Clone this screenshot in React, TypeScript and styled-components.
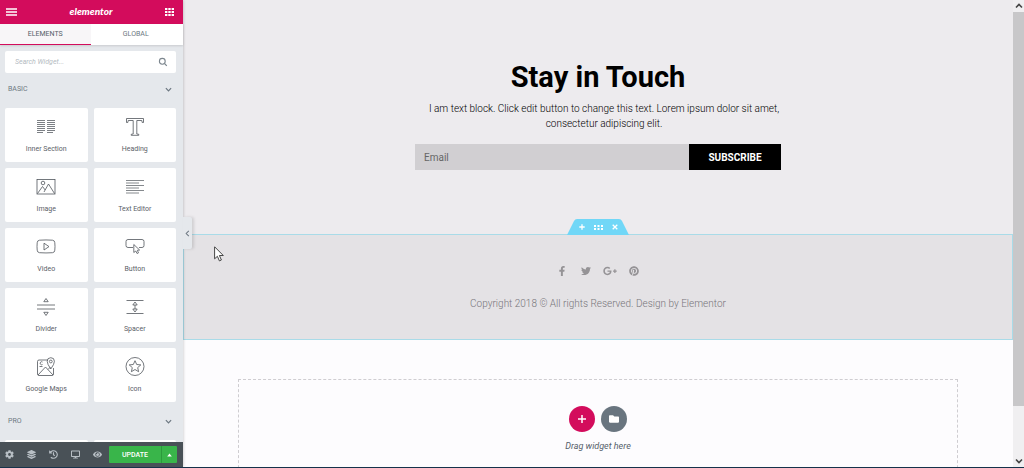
import React from "react";
import styled, { createGlobalStyle, css } from "styled-components";
import {
  FaCog,
  FaLayerGroup,
  FaHistory,
  FaDesktop,
  FaEye,
  FaFacebookF,
  FaTwitter,
  FaGooglePlusG,
  FaPinterest,
  FaFolder,
} from "react-icons/fa";

const pink = "#d30c5c";

const GlobalStyle = createGlobalStyle`
  *, *::before, *::after { box-sizing: border-box; }
  body {
    margin: 0;
    font-family: Roboto, "Liberation Sans", sans-serif;
    font-size: 10px;
    background: #fdfcfe;
  }
  button, input { font: inherit; color: inherit; margin: 0; }
  button { border: 0; padding: 0; background: none; cursor: pointer; }
  h1, p { margin: 0; }
`;

const Shell = styled.div`
  display: flex;
  height: 100vh;
  border-bottom: 1px solid #16324a;
  overflow: hidden;
`;

/* ---------- Panel ---------- */

const Panel = styled.aside`
  position: relative;
  z-index: 2;
  flex: 0 0 183px;
  display: flex;
  flex-direction: column;
  background: #e5e8ec;
  box-shadow: 0 0 3px rgba(0, 0, 0, 0.25);
`;

const PanelHeader = styled.header`
  flex: none;
  height: 24px;
  padding: 0 9px 0 6px;
  display: flex;
  align-items: center;
  justify-content: space-between;
  background: ${pink};
  color: #fff;
`;

const IconButton = styled.button`
  display: flex;
  align-items: center;
  justify-content: center;
`;

const Brand = styled.span`
  font-family: Lato, sans-serif;
  font-size: 10px;
  line-height: 16px;
  padding-bottom: 2px;
  font-weight: 900;
  font-style: italic;
`;

const Tabs = styled.div`
  flex: none;
  display: flex;
  height: 21px;
  padding-right: 2px;
  background: #fff;
  box-shadow: 0 1px 2px rgba(0, 0, 0, 0.12);
`;

const Tab = styled.button<{ $active?: boolean }>`
  flex: 1;
  font-size: 7px;
  line-height: 18px;
  color: #6d7882;
  border-bottom: 1px solid transparent;
  ${(p) =>
    p.$active &&
    css`
      background: #f8f6f8;
      color: #556068;
      border-bottom-color: ${pink};
    `}
`;

const PanelBody = styled.div`
  flex: 1;
  min-height: 0;
  overflow: hidden;
  padding: 6px 7px 0 5px;
`;

const Search = styled.label`
  display: flex;
  align-items: center;
  height: 22px;
  padding: 0 8px 0 10px;
  background: #fff;
  border-radius: 2px;
  color: #7c868e;
`;

const SearchInput = styled.input`
  flex: 1;
  min-width: 0;
  border: 0;
  padding: 0;
  outline: 0;
  background: none;
  font-size: 7px;
  line-height: 10px;
  font-style: italic;
  &::placeholder { color: #b4bbc1; opacity: 1; }
`;

const Category = styled.section`
  padding-bottom: 3px;
`;

const CategoryHeader = styled.button`
  width: 100%;
  height: 35px;
  padding: 0 4px 3px 3px;
  display: flex;
  align-items: center;
  justify-content: space-between;
  font-size: 7px;
  color: #6d7882;
`;

const WidgetGrid = styled.div`
  display: grid;
  grid-template-columns: 1fr 1fr;
  gap: 6px;
`;

const Widget = styled.button`
  height: 54px;
  padding-top: 9px;
  display: flex;
  flex-direction: column;
  align-items: center;
  gap: 7px;
  background: #fff;
  border-radius: 2px;
  color: #5b6168;
  font-size: 7px;
  line-height: 10px;
`;

const LineIcon = styled.svg`
  width: 20px;
  height: 20px;
  fill: none;
  stroke: #50565c;
  stroke-width: 0.8;
`;

const PanelFooter = styled.footer`
  flex: none;
  height: 25px;
  padding-right: 6px;
  display: flex;
  align-items: center;
  background: #495157;
  color: #b8bfc5;
`;

const Tools = styled.div`
  flex: 1;
  padding: 0 7px 0 5px;
  display: flex;
  justify-content: space-between;
`;

const Update = styled.div`
  display: flex;
  height: 17px;
  border-radius: 1px;
  overflow: hidden;
  background: #39b54a;
  color: #fff;
`;

const UpdateButton = styled.button`
  width: 52px;
  font-size: 7px;
  font-weight: 500;
`;

const UpdateMore = styled(IconButton)`
  width: 16px;
  border-left: 1px solid #2c9a3c;
`;

const Collapse = styled(IconButton)`
  position: absolute;
  left: 100%;
  top: 217px;
  width: 9px;
  height: 32px;
  background: #e5e8ec;
  border-radius: 0 2px 2px 0;
  box-shadow: 2px 0 3px rgba(0, 0, 0, 0.12);
  color: #6d7882;
`;

/* ---------- Preview ---------- */

const Preview = styled.main`
  position: relative;
  flex: 1;
  min-width: 0;
  overflow: hidden;
`;

const SignupSection = styled.section`
  padding: 60px 20px 64px;
  display: flex;
  flex-direction: column;
  align-items: center;
  text-align: center;
  background: #edebee;
  color: #000;
`;

const Title = styled.h1`
  font-size: 29px;
  line-height: 34px;
  font-weight: 700;
`;

const Copy = styled.p`
  width: 100%;
  max-width: 366px;
  padding: 7px 0 13px 12px;
  font-size: 10px;
  line-height: 15px;
  font-weight: 300;
  color: #000;
`;

const SignupForm = styled.form`
  display: flex;
  width: 100%;
  max-width: 366px;
  height: 26px;
`;

const EmailInput = styled.input`
  flex: 1;
  min-width: 0;
  border: 0;
  border-radius: 0;
  padding: 0 9px;
  background: #d1cfd2;
  font-size: 10px;
  &::placeholder { color: #666; opacity: 1; }
`;

const Subscribe = styled.button`
  width: 92px;
  background: #000;
  color: #fff;
  font-size: 10px;
  font-weight: 700;
`;

const FooterSection = styled.section`
  position: relative;
  padding: 30px 20px 28px;
  display: flex;
  flex-direction: column;
  align-items: center;
  gap: 20px;
  background: #e4e2e5;
  border: 1px solid #a9dbe8;
`;

const SectionHandle = styled.div`
  position: absolute;
  left: 50%;
  bottom: 100%;
  width: 62px;
  height: 16px;
  transform: translateX(-50%);
  padding: 0 7px;
  display: flex;
  align-items: center;
  justify-content: space-around;
  background: #71d7f7;
  clip-path: path("M0 16L7 2Q8 0 10 0H52Q54 0 55 2L62 16Z");
  color: #fff;
`;

const Socials = styled.nav`
  display: flex;
  gap: 9px;
`;

const SocialLink = styled.a`
  width: 15px;
  height: 12px;
  display: flex;
  align-items: center;
  justify-content: center;
  color: #959396;
`;

const Copyright = styled.p`
  font-size: 10px;
  line-height: 14px;
  font-weight: 300;
  color: #77757a;
`;

const AddSection = styled.section`
  max-width: 720px;
  height: 140px;
  margin: 39px auto 0;
  padding-top: 26px;
  display: flex;
  flex-direction: column;
  align-items: center;
  gap: 7px;
  border: 1px dashed #cfcdd1;
`;

const AddButtons = styled.div`
  display: flex;
  gap: 6px;
`;

const RoundButton = styled(IconButton)<{ $color: string }>`
  width: 26px;
  height: 26px;
  border-radius: 50%;
  background: ${(p) => p.$color};
  color: #fff;
`;

const DragHint = styled.p`
  font-size: 9px;
  line-height: 14px;
  font-style: italic;
  color: #55606a;
`;

const Cursor = styled.svg`
  position: absolute;
  left: 31px;
  top: 246px;
`;

/* ---------- Scroll rail ---------- */

const Rail = styled.div`
  flex: 0 0 11px;
  display: flex;
  flex-direction: column;
  background: #f0eff1;
`;

const RailButton = styled(IconButton)`
  flex: none;
  height: 12px;
  color: #444;
`;

const RailTrack = styled.div`
  flex: 1;
`;

const RailThumb = styled.div`
  height: 89%;
  background: #c8c7c9;
`;

type ChevronDir = "up" | "down" | "left";
const chevrons: Record<ChevronDir, string> = {
  up: "M1 5.5L4 2.5L7 5.5",
  down: "M1 2.5L4 5.5L7 2.5",
  left: "M5.5 1L2.5 4L5.5 7",
};

const Chevron = ({ dir, size = 8, weight = 1.2 }: { dir: ChevronDir; size?: number; weight?: number }) => (
  <svg width={size} height={size} viewBox="0 0 8 8" fill="none" stroke="currentColor" strokeWidth={weight} aria-hidden>
    <path d={chevrons[dir]} />
  </svg>
);

const widgets: { label: string; icon: React.ReactNode }[] = [
  {
    label: "Inner Section",
    icon: (
      <path
        strokeWidth="0.75"
        d="M1 3.500h8M1 5.500h8M1 7.500h8M1 9.500h8M1 11.500h8M1 13.500h8M1 15.500h6M11 3.500h8M11 5.500h8M11 7.500h8M11 9.500h8M11 11.500h8M11 13.500h8M11 15.500h6"
      />
    ),
  },
  {
    label: "Heading",
    icon: <path d="M1.500 1.500h17v4h-1.300l-.4-2h-5v13.500l2 .3v1h-7.600v-1l2-.3V3.500H3.200l-.4 2H1.500z" />,
  },
  {
    label: "Image",
    icon: (
      <>
        <rect x="1" y="2.500" width="18" height="14.500" />
        <circle cx="7" cy="6" r="1.800" />
        <path d="M1.500 16.500L6.500 9.500L9.200 13M8 15L12.500 7L18.500 16.500" />
      </>
    ),
  },
  {
    label: "Text Editor",
    icon: <path strokeWidth="0.7" d="M1 3.500h18M1 6h13M1 8.500h18M1 11h13M1 13.500h18M1 16h13" />,
  },
  {
    label: "Video",
    icon: (
      <>
        <path d="M3.500 3.200Q10 2.700 16.500 3.200Q18.700 3.400 18.800 5.700Q19.200 9.700 18.800 13.200Q18.700 15.500 16.500 15.700Q10 16.200 3.500 15.700Q1.300 15.500 1.200 13.200Q.8 9.700 1.200 5.700Q1.300 3.400 3.500 3.200z" />
        <path d="M8 6.200v6.800l5-3.400z" />
      </>
    ),
  },
  {
    label: "Button",
    icon: (
      <>
        <path d="M8 10.500H3Q1 10.500 1 8.500V4.500Q1 2.500 3 2.500h14Q19 2.500 19 4.500v4Q19 10.500 17 10.500h-3" />
        <path d="M8.800 7.500v8l2-1.500l1.200 2.500l1.500-.7l-1.200-2.500l2.300-.3z" />
      </>
    ),
  },
  {
    label: "Divider",
    icon: <path d="M1 8h18M1 12h18M10 1.500l2.200 3.200H7.800zM10 18.500l2.200-3.200H7.800z" />,
  },
  {
    label: "Spacer",
    icon: <path d="M1.500 3.500h17M1.500 16.500h17M10 5l2.200 3H7.800zM10 15l2.200-3H7.800zM10 8v4" />,
  },
  {
    label: "Google Maps",
    icon: (
      <>
        <path d="M12 3H3Q1.500 3 1.500 4.500v12.500q0 1.500 1.500 1.500h13q1.500 0 1.500-1.500V11M2 18l7.500-8l7.500 8M12 12.500l2.500-2.500" />
        <path d="M14.800 12Q11.200 7 11.200 4.300A3.600 3.600 0 0 1 18.400 4.300Q18.400 7 14.800 12z" />
        <circle cx="14.800" cy="4.500" r="1.400" />
        <path d="M6.500 5a1.500 1.500 0 1 0 0 2.500M3.500 9.500h3" />
      </>
    ),
  },
  {
    label: "Icon",
    icon: (
      <>
        <circle cx="10" cy="9.500" r="9" />
        <path d="M10 3.700l1.700 3.800l4.100.4l-3.100 2.700l.9 4.100l-3.600-2.200l-3.600 2.200l.9-4.100l-3.100-2.700l4.100-.4z" />
      </>
    ),
  },
];

const tools = [
  { label: "Settings", Icon: FaCog },
  { label: "Navigator", Icon: FaLayerGroup },
  { label: "History", Icon: FaHistory },
  { label: "Responsive mode", Icon: FaDesktop },
  { label: "Preview changes", Icon: FaEye },
];

const socials = [
  { label: "Facebook", Icon: FaFacebookF, size: 10 },
  { label: "Twitter", Icon: FaTwitter, size: 10 },
  { label: "Google Plus", Icon: FaGooglePlusG, size: 14 },
  { label: "Pinterest", Icon: FaPinterest, size: 10 },
];

export default function App() {
  return (
    <>
      <GlobalStyle />
      <Shell>
        <Panel>
          <PanelHeader>
            <IconButton aria-label="Menu">
              <svg width="11" height="8" viewBox="0 0 11 8" stroke="#fff" strokeWidth="1.400">
                <path d="M0 1h11M0 4h11M0 7h11" />
              </svg>
            </IconButton>
            <Brand>elementor</Brand>
            <IconButton aria-label="Widgets">
              <svg width="9" height="8" viewBox="0 0 9 8" fill="#fff">
                <path d="M0 0h2.400v2H0zM3.300 0h2.400v2H3.300zM6.600 0H9v2H6.600zM0 3h2.400v2H0zM3.300 3h2.400v2H3.300zM6.600 3H9v2H6.600zM0 6h2.400v2H0zM3.300 6h2.400v2H3.300zM6.600 6H9v2H6.600z" />
              </svg>
            </IconButton>
          </PanelHeader>
          <Tabs role="tablist">
            <Tab role="tab" aria-selected $active>ELEMENTS</Tab>
            <Tab role="tab" aria-selected={false}>GLOBAL</Tab>
          </Tabs>
          <PanelBody>
            <Search>
              <SearchInput type="text" placeholder="Search Widget..." aria-label="Search Widget" />
              <svg width="10" height="10" viewBox="0 0 10 10" fill="none" stroke="currentColor" strokeWidth="1.100" aria-hidden>
                <circle cx="4.300" cy="4.300" r="2.900" />
                <path d="M6.500 6.500L8.800 8.800" />
              </svg>
            </Search>
            <Category>
              <CategoryHeader aria-expanded>
                BASIC
                <Chevron dir="down" size={7} weight={1.4} />
              </CategoryHeader>
              <WidgetGrid>
                {widgets.map((w) => (
                  <Widget key={w.label}>
                    <LineIcon viewBox="0 0 20 20" aria-hidden>{w.icon}</LineIcon>
                    {w.label}
                  </Widget>
                ))}
              </WidgetGrid>
            </Category>
            <Category>
              <CategoryHeader aria-expanded>
                PRO
                <Chevron dir="down" size={7} weight={1.4} />
              </CategoryHeader>
              <WidgetGrid>
                <Widget aria-label="Posts" />
                <Widget aria-label="Portfolio" />
              </WidgetGrid>
            </Category>
          </PanelBody>
          <PanelFooter>
            <Tools>
              {tools.map(({ label, Icon }) => (
                <IconButton key={label} aria-label={label}>
                  <Icon size={9} />
                </IconButton>
              ))}
            </Tools>
            <Update>
              <UpdateButton>UPDATE</UpdateButton>
              <UpdateMore aria-label="Save options">
                <svg width="5" height="4" viewBox="0 0 5 4" fill="#fff">
                  <path d="M2.500 .5L4.800 3.500H.2z" />
                </svg>
              </UpdateMore>
            </Update>
          </PanelFooter>
          <Collapse aria-label="Collapse panel">
            <Chevron dir="left" size={7} />
          </Collapse>
        </Panel>

        <Preview>
          <SignupSection>
            <Title>Stay in Touch</Title>
            <Copy>
              I am text block. Click edit button to change this text. Lorem ipsum dolor sit amet, consectetur adipiscing elit.
            </Copy>
            <SignupForm onSubmit={(e) => e.preventDefault()}>
              <EmailInput type="email" placeholder="Email" aria-label="Email" />
              <Subscribe type="submit">SUBSCRIBE</Subscribe>
            </SignupForm>
          </SignupSection>

          <FooterSection>
            <SectionHandle>
              <IconButton aria-label="Add section">
                <svg width="6" height="6" viewBox="0 0 6 6" stroke="#fff" strokeWidth="1.300">
                  <path d="M3 .3v5.400M.3 3h5.400" />
                </svg>
              </IconButton>
              <IconButton aria-label="Edit section">
                <svg width="9" height="5" viewBox="0 0 9 5" fill="#fff">
                  <path d="M0 0h2v2H0zM3.500 0h2v2h-2zM7 0h2v2H7zM0 3h2v2H0zM3.500 3h2v2h-2zM7 3h2v2H7z" />
                </svg>
              </IconButton>
              <IconButton aria-label="Delete section">
                <svg width="6" height="6" viewBox="0 0 6 6" stroke="#fff" strokeWidth="1.300">
                  <path d="M.7 .7l4.600 4.600M5.300 .7L.7 5.300" />
                </svg>
              </IconButton>
            </SectionHandle>
            <Socials aria-label="Social links">
              {socials.map(({ label, Icon, size }) => (
                <SocialLink key={label} href="#" aria-label={label}>
                  <Icon size={size} />
                </SocialLink>
              ))}
            </Socials>
            <Copyright>Copyright 2018 © All rights Reserved. Design by Elementor</Copyright>
          </FooterSection>

          <AddSection>
            <AddButtons>
              <RoundButton $color={pink} aria-label="Add new section">
                <svg width="8" height="8" viewBox="0 0 8 8" stroke="#fff" strokeWidth="1.500">
                  <path d="M4 0v8M0 4h8" />
                </svg>
              </RoundButton>
              <RoundButton $color="#69757f" aria-label="Add template">
                <FaFolder size={10} />
              </RoundButton>
            </AddButtons>
            <DragHint>Drag widget here</DragHint>
          </AddSection>

          <Cursor width="10" height="16" viewBox="0 0 10 16" fill="#fff" stroke="#333" strokeWidth="0.900" aria-hidden>
            <path d="M.6 .8v12l2.800-2.500l2 4.600l2-.9l-2-4.500h3.900z" />
          </Cursor>
        </Preview>

        <Rail>
          <RailButton aria-label="Scroll up"><Chevron dir="up" weight={1.6} /></RailButton>
          <RailTrack><RailThumb /></RailTrack>
          <RailButton aria-label="Scroll down"><Chevron dir="down" weight={1.6} /></RailButton>
        </Rail>
      </Shell>
    </>
  );
}
